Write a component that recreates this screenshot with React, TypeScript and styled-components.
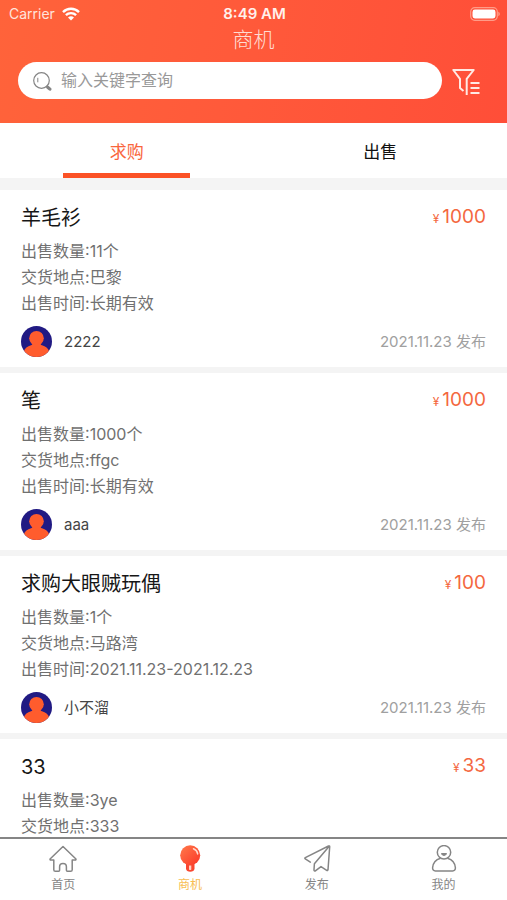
import React, { useState } from 'react';
import styled, { createGlobalStyle } from 'styled-components';

const GlobalStyle = createGlobalStyle`
  * { box-sizing: border-box; }
  body {
    margin: 0;
    background: #fff;
    font-family: Inter, "Noto Sans CJK SC", sans-serif;
  }
  button, input { font-family: inherit; }
  h1, h2, p { margin: 0; }
`;

const Page = styled.div`
  display: flex;
  flex-direction: column;
  height: 100vh;
  overflow: hidden;
`;

const Header = styled.header`
  flex: none;
  padding-bottom: 24px;
  background: linear-gradient(100deg, #ff633a 0%, #ff593a 50%, #ff4e38 100%);
  color: #fff;
`;

const StatusBar = styled.div`
  display: grid;
  grid-template-columns: 1fr auto 1fr;
  align-items: center;
  height: 27px;
  padding: 0 7px 0 9px;
  font-size: 14px;
  line-height: 20px;
`;

const Carrier = styled.span`
  display: flex;
  align-items: center;
  gap: 7px;
  color: #ffe4dc;
`;

const Clock = styled.span`
  font-size: 15px;
  font-weight: 600;
  color: #fff1ec;
`;

const BatterySlot = styled.span`
  display: flex;
  justify-content: flex-end;
`;

const PageTitle = styled.h1`
  font-size: 21px;
  font-weight: 300;
  line-height: 26px;
  text-align: center;
  color: #ffdcd2;
`;

const SearchRow = styled.form`
  display: flex;
  align-items: center;
  gap: 10px;
  padding: 9px 27px 0 18px;
`;

const SearchField = styled.label`
  display: flex;
  flex: 1;
  align-items: center;
  gap: 9px;
  height: 37px;
  padding: 0 16px 0 14px;
  border-radius: 19px;
  background: #fff;
`;

const SearchInput = styled.input`
  flex: 1;
  min-width: 0;
  height: 28px;
  margin-bottom: 1px;
  padding: 0;
  border: 0;
  outline: 0;
  background: transparent;
  color: #333;
  font-size: 16px;
  &::placeholder { color: #999; opacity: 1; }
`;

const IconButton = styled.button`
  display: flex;
  padding: 0;
  border: 0;
  background: none;
  color: #ffe9e3;
  cursor: pointer;
`;

const Tabs = styled.div`
  display: flex;
  flex: none;
  height: 55px;
`;

const Tab = styled.button<{ $active: boolean }>`
  display: flex;
  flex: 1;
  flex-direction: column;
  align-items: center;
  justify-content: space-between;
  padding: 17px 0 0;
  border: 0;
  background: #fff;
  color: ${(p) => (p.$active ? '#f9653c' : '#111')};
  font-size: 17px;
  line-height: 24px;
  cursor: pointer;
  &::after {
    content: '';
    width: 50%;
    height: 5px;
    background: ${(p) => (p.$active ? '#fb5226' : 'transparent')};
  }
`;

const List = styled.main`
  flex: 1;
  min-height: 0;
  overflow: hidden;
  border-top: 12px solid #f4f4f4;
`;

const Card = styled.article`
  padding: 14px 21px 10px;
  border-bottom: 6px solid #f4f4f4;
  &:last-child { border-bottom: 0; padding-bottom: 0; }
`;

const CardHead = styled.div`
  display: flex;
  align-items: center;
  justify-content: space-between;
  height: 28px;
  margin-bottom: 6px;
`;

const CardTitle = styled.h2`
  font-size: 20px;
  font-weight: 400;
  line-height: 28px;
  color: #161616;
`;

const Price = styled.span`
  display: flex;
  align-items: baseline;
  gap: 3px;
  color: #f4683f;
  font-size: 19px;
  line-height: 28px;
`;

const Currency = styled.small`
  font-size: 12px;
`;

const Detail = styled.p`
  font-size: 16px;
  line-height: 26px;
  color: #707070;
`;

const CardFoot = styled.div`
  display: flex;
  align-items: center;
  gap: 12px;
  margin-top: 10px;
  height: 31px;
`;

const UserName = styled.span`
  flex: 1;
  font-size: 15px;
  line-height: 20px;
  color: #454545;
`;

const Published = styled.time`
  font-size: 15px;
  line-height: 20px;
  color: #a0a0a0;
`;

const BottomNav = styled.nav`
  display: flex;
  flex: none;
  height: 63px;
  border-top: 2px solid #858585;
  background: #fff;
`;

const NavLink = styled.a<{ $active?: boolean }>`
  display: flex;
  flex: 1;
  flex-direction: column;
  align-items: center;
  gap: 2px;
  padding-top: 6px;
  color: ${(p) => (p.$active ? '#f8bd52' : '#858585')};
  font-size: 12px;
  line-height: 20px;
  text-decoration: none;
`;

const WifiIcon = () => (
  <svg width="18" height="14" viewBox="0 0 18 14" fill="none" stroke="#fff" strokeWidth="2.4" aria-hidden="true">
    <path d="M1 5.100a11.400 11.400 0 0 1 16 0M3.900 8.200a7.300 7.300 0 0 1 10.200 0" />
    <path d="M6 10.600a4.300 4.300 0 0 1 6 0L9 13.600z" fill="#fff" stroke="none" />
  </svg>
);

const BatteryIcon = () => (
  <svg width="30" height="14" viewBox="0 0 30 14" aria-hidden="true">
    <rect x=".7" y=".7" width="26.6" height="12.6" rx="4" fill="none" stroke="#ff9c88" strokeWidth="1.2" />
    <rect x="2.5" y="2.5" width="23" height="9" rx="2.4" fill="#fff" />
    <path d="M28.3 4.8c2 .7 2 3.7 0 4.4z" fill="#ff9c88" />
  </svg>
);

const SearchIcon = () => (
  <svg width="20" height="20" viewBox="0 0 20 20" fill="none" stroke="#858585" aria-hidden="true">
    <circle cx="9.500" cy="9.500" r="7.800" strokeWidth="1.200" />
    <path d="M5.800 6.800v4.500" strokeWidth="1" />
    <path d="m14.500 14.700 1 1" strokeWidth="1.500" />
    <path d="m15.700 16.200 2.200 1.900" strokeWidth="3.200" strokeLinecap="round" />
  </svg>
);

const FilterIcon = () => (
  <svg width="28" height="30" viewBox="0 0 28 30" fill="none" stroke="currentColor" strokeWidth="2" aria-hidden="true">
    <path d="M11.500 25 8 22V12.800L1.300 4h20.400L14.700 12.800V29" strokeLinejoin="round" />
    <path d="M18.500 17h9M18.500 22h9M18.500 27h9" />
  </svg>
);

const Avatar = () => (
  <svg width="31" height="31" viewBox="0 0 31 31" aria-hidden="true">
    <defs>
      <clipPath id="avatar-disc"><circle cx="15.500" cy="15.500" r="15.500" /></clipPath>
    </defs>
    <g clipPath="url(#avatar-disc)">
      <rect width="31" height="31" fill="#211a83" />
      <circle cx="15.500" cy="12.200" r="7.300" fill="#ff5c2d" />
      <path d="M11.200 17h8.600c-.3 1.300 0 1.900 1.200 2.300 3.600 1 6.200 3.100 7.200 6.200V31H2.800v-5.500c1-3.100 3.600-5.200 7.200-6.200 1.200-.4 1.500-1 1.200-2.300z" fill="#ff5c2d" />
    </g>
  </svg>
);

const HomeIcon = () => (
  <svg width="28" height="28" viewBox="0 0 28 28" fill="none" stroke="currentColor" strokeWidth="1.500" strokeLinejoin="round" aria-hidden="true">
    <path d="M14 1.500 1.300 13.700c-.6.700-.2 1.400.6 1.400h2.900v9.600c0 1 .6 1.600 1.600 1.600h3.200c.7 0 1-.4 1-1v-3.500c0-4.300 6.800-4.300 6.800 0v3.500c0 .6.300 1 1 1h3.200c1 0 1.600-.6 1.600-1.600v-9.600h2.900c.8 0 1.200-.7.600-1.400z" />
  </svg>
);

const BulbIcon = () => (
  <svg width="28" height="28" viewBox="0 0 28 28" fill="none" aria-hidden="true">
    <defs>
      <linearGradient id="bulb" x1="0" y1="0" x2="1" y2="1">
        <stop offset="0" stopColor="#ff7b4b" />
        <stop offset="1" stopColor="#fb3527" />
      </linearGradient>
    </defs>
    <path d="M10 17h8.500v6.500c0 4.300-8.500 4.300-8.500 0z" fill="#f94731" />
    <circle cx="14.200" cy="10.200" r="10" fill="url(#bulb)" />
    <path d="M13 20.500h2.300v4c-.6.700-1.700.7-2.300 0z" fill="#ffd0c4" />
    <path d="M17.500 3.800c2.300.9 3.800 2.700 4.200 5.100" stroke="#ffd8cc" strokeWidth="1.500" strokeLinecap="round" />
  </svg>
);

const PlaneIcon = () => (
  <svg width="28" height="28" viewBox="0 0 28 28" fill="none" stroke="currentColor" strokeWidth="1.500" strokeLinejoin="round" strokeLinecap="round" aria-hidden="true">
    <path d="M7.300 17.200 2.300 13.900c-.6-.4-.6-1 0-1.300L25.500 1c.7-.3 1.200 0 1.200.7l-1.700 23c-.1.800-.7 1.100-1.300.7l-5.700-3.800-5.300 4c-1 .8-1.800.3-1.700-.8l.4-6L26.200 1.200" />
  </svg>
);

const UserIcon = () => (
  <svg width="28" height="28" viewBox="0 0 28 28" fill="none" stroke="currentColor" strokeWidth="1.500" aria-hidden="true">
    <circle cx="14" cy="7.300" r="6.700" />
    <path d="M10.500 13.200c-4.500 1.300-7.600 4.800-7.900 9.600-.1 2 .9 3.100 2.800 3.100h17.200c1.900 0 2.900-1.100 2.800-3.100-.3-4.800-3.400-8.300-7.900-9.600" />
    <path d="M11.500 8.500h5c-.4 2.600-4.600 2.600-5 0z" fill="currentColor" strokeWidth="1" />
  </svg>
);

type Listing = {
  title: string;
  price: string;
  amount: string;
  place: string;
  time?: string;
  user?: string;
};

const listings: Listing[] = [
  { title: '羊毛衫', price: '1000', amount: '11个', place: '巴黎', time: '长期有效', user: '2222' },
  { title: '笔', price: '1000', amount: '1000个', place: 'ffgc', time: '长期有效', user: 'aaa' },
  { title: '求购大眼贼玩偶', price: '100', amount: '1个', place: '马路湾', time: '2021.11.23-2021.12.23', user: '小不溜' },
  { title: '33', price: '33', amount: '3ye', place: '333' },
];

const navItems = [
  { label: '首页', icon: <HomeIcon /> },
  { label: '商机', icon: <BulbIcon />, active: true },
  { label: '发布', icon: <PlaneIcon /> },
  { label: '我的', icon: <UserIcon /> },
];

export default function App() {
  const [tab, setTab] = useState('求购');

  return (
    <>
      <GlobalStyle />
      <Page>
        <Header>
          <StatusBar>
            <Carrier>Carrier <WifiIcon /></Carrier>
            <Clock>8:49 AM</Clock>
            <BatterySlot><BatteryIcon /></BatterySlot>
          </StatusBar>
          <PageTitle>商机</PageTitle>
          <SearchRow onSubmit={(e) => e.preventDefault()}>
            <SearchField>
              <SearchIcon />
              <SearchInput type="text" placeholder="输入关键字查询" aria-label="输入关键字查询" />
            </SearchField>
            <IconButton type="button" aria-label="筛选"><FilterIcon /></IconButton>
          </SearchRow>
        </Header>
        <Tabs role="tablist">
          {['求购', '出售'].map((name) => (
            <Tab key={name} type="button" role="tab" aria-selected={tab === name} $active={tab === name} onClick={() => setTab(name)}>
              {name}
            </Tab>
          ))}
        </Tabs>
        <List>
          {listings.map((item) => (
            <Card key={item.title}>
              <CardHead>
                <CardTitle>{item.title}</CardTitle>
                <Price><Currency>¥</Currency>{item.price}</Price>
              </CardHead>
              <Detail>出售数量:{item.amount}</Detail>
              <Detail>交货地点:{item.place}</Detail>
              {item.time && <Detail>出售时间:{item.time}</Detail>}
              {item.user && (
                <CardFoot>
                  <Avatar />
                  <UserName>{item.user}</UserName>
                  <Published dateTime="2021-11-23">2021.11.23 发布</Published>
                </CardFoot>
              )}
            </Card>
          ))}
        </List>
        <BottomNav>
          {navItems.map((item) => (
            <NavLink key={item.label} href="#" $active={item.active} aria-current={item.active ? 'page' : undefined}>
              {item.icon}
              {item.label}
            </NavLink>
          ))}
        </BottomNav>
      </Page>
    </>
  );
}
